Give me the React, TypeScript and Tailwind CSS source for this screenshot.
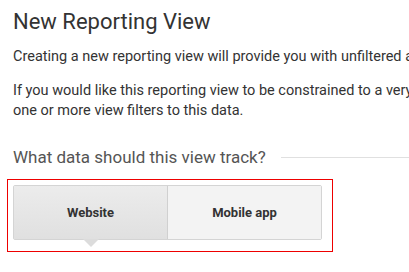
export default function App() {
  return (
    <div
      className="w-[409px] h-[272px] overflow-hidden bg-white text-[#333]"
      style={{ fontFamily: 'Roboto, "Noto Sans", sans-serif' }}
    >
      <div className="w-[700px] pl-[13px] pt-2">
        <h1 className="text-[22px] leading-[28px] font-normal text-[#333]">New Reporting View</h1>
        <p className="mt-[11px] text-[14.5px] leading-5 whitespace-nowrap">
          Creating a new reporting view will provide you with unfiltered access to all the data collected.
        </p>
        <p className="mt-[14px] text-[14.5px] leading-5 whitespace-nowrap">
          If you would like this reporting view to be constrained to a very specific subset of your data, you can apply
          <br />
          one or more view filters to this data.
        </p>
        <div className="mt-6 flex items-center gap-[15px]">
          <h2 className="text-[17px] leading-6 text-[#555] whitespace-nowrap">What data should this view track?</h2>
          <div className="flex-1 h-px bg-[#e0e0e0]" />
        </div>
      </div>

      <div className="ml-[7px] mt-[10px] w-[326px] h-[73px] border border-[#e00] pt-[5px] pl-[5px]">
        <div className="flex w-[309px] h-[55px] rounded-[2px] border border-[#d4d4d4]">
          <button className="relative flex-1 flex items-center justify-center bg-gradient-to-b from-[#ececec] to-[#e0e0e0] border-r border-[#d0d0d0] text-[13px] font-bold text-[#333]">
            Website
            <span className="absolute left-1/2 -translate-x-1/2 top-full w-0 h-0 border-l-[8px] border-r-[8px] border-t-[8px] border-l-transparent border-r-transparent border-t-[#dcdcdc]" />
          </button>
          <button className="flex-1 flex items-center justify-center bg-[#f3f3f3] text-[13px] font-bold text-[#333]">
            Mobile app
          </button>
        </div>
      </div>
    </div>
  );
}
